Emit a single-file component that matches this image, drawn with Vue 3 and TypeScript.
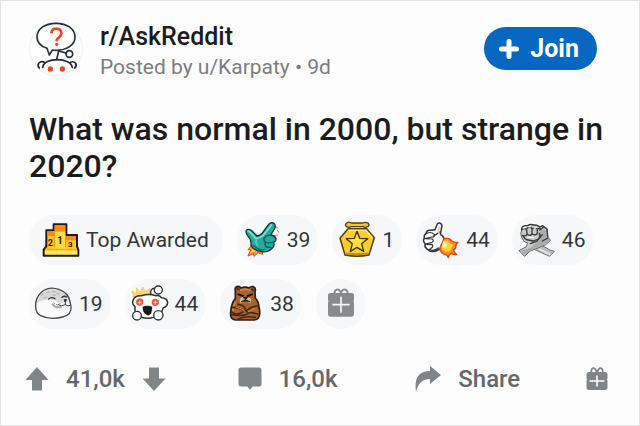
<script setup lang="ts">
import { ref } from 'vue'

interface Award {
  id: string
  label: string
  count: number
  box: string
}

const awards: Award[] = [
  { id: 'rocket-hand', label: 'Rocket hand', count: 39, box: '45 49 108 108' },
  { id: 'star', label: 'Star medal', count: 1, box: '327 49 108 108' },
  { id: 'like', label: 'Rocket like', count: 44, box: '54 49 108 108' },
  { id: 'clasp', label: 'Clasped hands', count: 46, box: '336 49 108 108' },
  { id: 'seal', label: 'Wholesome seal', count: 19, box: '48 48 108 108' },
  { id: 'snoo', label: 'Starry snoo', count: 44, box: '330 48 108 108' },
  { id: 'bear', label: 'Bear hug', count: 38, box: '45 48 108 108' },
]

const joined = ref<boolean>(false)
</script>

<template>
  <article class="post">
    <header class="head">
      <svg class="avatar" viewBox="0 0 162 162" aria-hidden="true">
        <circle cx="81" cy="81" r="79" fill="#fff" stroke="#eeeff0" stroke-width="3" />
        <g fill="none" stroke="#26292d" stroke-width="5" stroke-linecap="round" stroke-linejoin="round">
          <path d="M54 79C36 73 24 60 24 45C24 21 48 4 81 4s57 17 57 41s-25 40-57 40q-6 0-11-1L61 99Z" stroke="#213244" />
          <path d="M83 113l6-26l22 6" />
          <circle cx="121" cy="96" r="10" />
          <path d="M41 136C45 106 124 104 130 136" />
          <path d="M31 138q-7-8-1-15q8-8 18-1M123 122q9-6 16 1q6 8-2 15" />
        </g>
        <path d="M67 34q1-14 15-14q15 0 15 14q0 8-8 13q-6 4-6 11" fill="none" stroke="#f4441f" stroke-width="8" />
        <circle cx="83" cy="67" r="5" fill="#f4441f" />
        <circle cx="64" cy="141" r="8" fill="#f4441f" />
        <circle cx="100" cy="141" r="8" fill="#f4441f" />
      </svg>
      <div class="who">
        <a class="sub" href="#">r/AskReddit</a>
        <p class="by">Posted by u/Karpaty • 9d</p>
      </div>
      <button class="join" type="button" :aria-pressed="joined" @click="joined = !joined">
        <svg class="plus" viewBox="0 0 20 20" aria-hidden="true">
          <path d="M10 2.500v15M2.500 10h15" fill="none" stroke="#fff" stroke-width="5" stroke-linecap="round" />
        </svg>
        Join
      </button>
    </header>

    <h1 class="title">What was normal in 2000, but strange in 2020?</h1>

    <ul class="awards">
      <li class="pill top">
        <svg class="icon" viewBox="69 49 108 108" aria-hidden="true">
          <path d="M71 150V132L79 122V74h22V56h38v32h32v34l4 10v18Z" fill="#ffc52b" stroke="#211a18" stroke-width="6" stroke-linejoin="round" />
          <path d="M82 77h21v14H82ZM104 59h32v20h-32ZM138 91h30v13h-30Z" fill="#f68b1e" />
          <path d="M104 78h32v52h-32Z" fill="#ffdb3c" />
          <path d="M103 77v48M137 90v35" stroke="#e5941e" stroke-width="3" />
          <path d="M75 135h97v11H75Z" fill="#ffe777" />
          <path d="M76 131h95" stroke="#eda421" stroke-width="3" />
          <g class="rank" fill="#2a2119" text-anchor="middle">
            <text x="91" y="121" font-size="27">2</text>
            <text x="120" y="116" font-size="31">1</text>
            <text x="151" y="125" font-size="24">3</text>
          </g>
        </svg>
        <span>Top Awarded</span>
      </li>

      <li v-for="award in awards" :key="award.id" class="pill">
        <svg class="icon" :viewBox="award.box" role="img" :aria-label="award.label">
          <g v-if="award.id === 'rocket-hand'" stroke-linejoin="round" stroke-linecap="round">
            <path d="M68 119l-11 13l8 0l-8 19l17-7l1 8l12-11l14 5l-4-18Z" fill="#ff9b2c" stroke="#dc4a20" stroke-width="3" />
            <path d="M72 127l-5 13l11-4l10 0Z" fill="#ffe25c" />
            <path d="M139 62l8 5M145 73l4 7M137 91l8-3" stroke="#ef6659" stroke-width="3" fill="none" />
            <path d="M53 73q8-5 17 4l14 14q9-1 16-9l19-26q8-8 17-2q5 6 1 15l-12 19q12 1 16 10q1 8-7 13q4 9-4 16q-12 14-31 11Q75 136 66 119Q68 103 56 90Q48 79 53 73Z" fill="#26aaa0" stroke="#17363b" stroke-width="4" />
            <path d="M57 77q5-1 10 6l13 15q11 1 23-9l24-31" fill="none" stroke="#7de2cf" stroke-width="5" />
            <path d="M123 89q-11-2-18 9q-2 10 8 13q10 2 20-2M108 112q-1 10 8 13l10 0M74 119q12 15 31 13" fill="none" stroke="#145e60" stroke-width="4" />
            <path d="M82 103q-4 9 4 16" fill="none" stroke="#63d4c3" stroke-width="4" />
          </g>

          <g v-else-if="award.id === 'star'" stroke-linejoin="round">
            <path d="M350 52q7-5 14 0h34q8-4 16 0q6 7-1 11q-8 4-14 0h-35q-8 4-15 0q-5-6 1-11Z" fill="#eec931" stroke="#51400f" stroke-width="4" />
            <path d="M357 66l-2 7M407 66l2 7" stroke="#5b4711" stroke-width="4" />
            <path d="M354 69h56l23 27l-16 52q-36 7-72 0l-15-50Z" fill="#f4ce30" stroke="#51400f" stroke-width="4.500" />
            <path d="M356 74h52l20 23" fill="none" stroke="#fff082" stroke-width="4" />
            <path d="M348 143q34 5 66 0" fill="none" stroke="#c68a16" stroke-width="5" />
            <path d="M381 77l8 21l24 1l-18 15l6 23l-20-12l-20 12l6-23l-18-15l24-1Z" fill="#ffdf39" stroke="#42320d" stroke-width="4" />
          </g>

          <g v-else-if="award.id === 'like'" stroke-linejoin="round" stroke-linecap="round">
            <path d="M90 72l6-15q2-6 8-5q8 2 6 13l-4 21q16 9 10 25q-3 14-17 22Q79 144 65 129q-8-6-4-14q-9-9-3-18q-2-9 5-13q1-12 15-10Z" fill="#fff" stroke="#303235" stroke-width="4.500" />
            <path d="M64 84q13-8 24 2q3 8-7 8l-20 5M60 99l22 1q7 7-3 11l-17 4M64 116l18 1q4 8-5 11M85 91q10-4 18-12M72 130q14 9 28-3" fill="none" stroke="#303235" stroke-width="3.500" />
            <path d="M103 64l-3 16" fill="none" stroke="#d5d7d8" stroke-width="5" />
            <path d="M117 99Q131 94 141 106Q150 112 159 110Q150 118 153 124Q152 131 145 133Q149 143 155 147Q144 146 138 143Q132 147 130 156Q126 147 121 147Q111 145 106 136Q103 127 109 117Z" fill="#ff8b20" stroke="#df451b" stroke-width="4" />
            <path d="M115 105Q127 102 132 109Q136 116 146 117Q138 123 141 129Q134 131 133 138Q127 134 122 141Q121 134 111 133Q106 125 112 117Z" fill="#ffd734" />
            <path d="M114 108q9 0 12 9q-2 9-12 10q-4-9 0-19Z" fill="#fff7ad" />
          </g>

          <g v-else-if="award.id === 'clasp'" stroke-linejoin="round" stroke-linecap="round">
            <path d="M377 104l52 29l13 4l-14 15l-43-19l-18-14Z" fill="#bcbdbd" stroke="#777" stroke-width="3" />
            <path d="M344 71q0-10 11-11l8-1l8-3l9 2l10 1l9 5l8-4l13 10l2 23l9 11l-15 13l-48 20l-15 15l-17-17l22-12l4-11q-14-2-17-15q-7-12-1-26Z" fill="#c9caca" stroke="#666" stroke-width="3" />
            <path d="M394 84q12-16 21-12l7 18l8 14l-20 13l-44 20l-12 12l-12-14l29-9l25-22Z" fill="#a9aaaa" />
            <path d="M344 73q9-9 15 0l1 14q-6 6-14 2M360 69q8-11 15-1v17q-6 8-14 1M376 70q8-10 15 0v14q-7 7-15 1M391 70q8-5 11 2M349 91q5 12 15 12l15 3l15-6q8-10 3-17M370 114l19-7l17-20M398 73l13-9M406 106l17-9M344 71q0-10 11-11l8-1l8-3l9 2l10 1l9 5l8-4l13 10l2 23" fill="none" stroke="#383838" stroke-width="4" />
            <path d="M349 67l7-2M364 63l7-1M380 64l8 1M362 94l18 2" fill="none" stroke="#f6f6f6" stroke-width="4" />
            <path d="M399 131l29 15" fill="none" stroke="#e1e2e2" stroke-width="6" />
          </g>

          <g v-else-if="award.id === 'seal'" stroke-linejoin="round" stroke-linecap="round">
            <path d="M47 112Q45 84 65 66Q89 47 118 59Q144 69 149 91L153 109Q156 134 128 141Q91 151 62 137Q48 131 47 112Z" fill="#fafafa" />
            <path d="M50 100Q55 75 75 63Q99 51 122 64Q142 74 145 93Q124 104 103 91Q76 84 50 100Z" fill="#d8d8d8" />
            <path d="M65 76l5-4M80 68l6-2M97 64l8 1M111 70l7 2M72 84l8-3M99 75l8 1" stroke="#b6b6b6" stroke-width="4" />
            <path d="M47 112Q45 84 65 66Q89 47 118 59Q144 69 149 91L153 109Q156 134 128 141Q91 151 62 137Q48 131 47 112Z" fill="none" stroke="#454545" stroke-width="4" />
            <path d="M86 87q9-8 19-1M126 82q7-6 14-1" fill="none" stroke="#363636" stroke-width="4" />
            <path d="M131 88l10 0l-3 7l-5 0Z" fill="#242424" />
            <path d="M136 94v10q-11 7-22 0M136 104q8 7 16 2" fill="none" stroke="#3c3c3c" stroke-width="3" />
            <path d="M98 103q8 12 25 8" fill="none" stroke="#aaa" stroke-width="6" />
            <path d="M102 99l1 1M110 104l1 1M118 99l1 1" stroke="#555" stroke-width="3" />
          </g>

          <g v-else-if="award.id === 'snoo'" stroke-linejoin="round" stroke-linecap="round">
            <path d="M335 82l-5-19l13 8l0-17l13 12l6-15l9 14l13-10l-1 21Z" fill="#ffd971" stroke="#f3b855" stroke-width="2" />
            <path d="M387 76q-5-21 12-22" fill="none" stroke="#313131" stroke-width="4" />
            <circle cx="409" cy="60" r="12" fill="#fff" stroke="#303030" stroke-width="4" />
            <path d="M333 91Q338 76 358 77q22-7 44 0q12-3 16 6q17 1 19 14q-1 13-14 17q-4 26-36 30q-30 4-45-15q-5-9-3-19q-10-8-6-19Z" fill="#fff" stroke="#303030" stroke-width="4.500" />
            <circle cx="353" cy="96" r="11" fill="#ef5940" />
            <circle cx="400" cy="97" r="11" fill="#ef5940" />
            <path d="M353 90l2 5l5 1l-5 3l-2 5l-2-5l-5-2l5-2ZM400 91l2 4l5 1l-5 3l-2 5l-2-5l-5-2l5-2Z" fill="#ffd1a1" />
            <path d="M362 110q14-6 29 0l-3 20q-8 11-17 3q-10-8-9-23Z" fill="#191919" />
            <circle cx="345" cy="137" r="13" fill="#fff" stroke="#303030" stroke-width="4" />
            <circle cx="409" cy="136" r="14" fill="#fff" stroke="#303030" stroke-width="4" />
          </g>

          <g v-else stroke-linejoin="round" stroke-linecap="round">
            <path d="M70 63q-3-13 8-14q6 0 9 5q12-5 24 0q5-6 13-4q9 4 5 15l1 19q10 10 11 28q4 15 1 25q-3 13-17 13H71q-13-2-15-14q-1-15 3-29q2-12 11-22Z" fill="#a8622b" stroke="#2b1d19" stroke-width="5" />
            <path d="M76 56l6 3M120 57l3 4" stroke="#4a2a1b" stroke-width="6" />
            <path d="M85 61q14-6 28 0M69 99q-7 13-6 25" fill="none" stroke="#c98a4b" stroke-width="5" />
            <path d="M79 73l14 5M120 73l-13 5" stroke="#23130e" stroke-width="6" />
            <path d="M83 89q5-10 16-9q13-1 19 8l-3 12q-15-8-30 0Z" fill="#d6ba91" />
            <path d="M95 82h12l-6 7ZM88 95q12-9 25 0" fill="#221a1a" stroke="#221a1a" stroke-width="3" />
            <path d="M62 112q21 0 38 12l37 8M136 108q-17 1-32 13l-20 9q-17 6-24-5M78 103q18 2 22 14M60 134q34 6 50-4M79 147q20-10 51-5" fill="none" stroke="#44281c" stroke-width="5" />
            <path d="M74 113q19 3 25 13M128 116l-19 9" fill="none" stroke="#cb7d3b" stroke-width="4" />
          </g>
        </svg>
        <span>{{ award.count }}</span>
      </li>

      <li>
        <button class="pill give" type="button" aria-label="Give award">
          <svg class="icon" viewBox="330 48 108 108" aria-hidden="true">
            <path d="M384 70q-4-14-13-11q-9 4-5 13M384 70q4-14 13-11q9 4 5 13" fill="none" stroke="#878b8e" stroke-width="6" />
            <path d="M352 69h64q7 0 7 7v15l-2 3l2 3v36q0 7-7 7h-64q-7 0-7-7V97l2-3l-2-3V76q0-7 7-7Z" fill="#878b8e" />
            <path d="M384 80v48M358 104h52" stroke="#f6f7f9" stroke-width="5" />
          </svg>
        </button>
      </li>
    </ul>

    <footer class="actions">
      <div class="votes">
        <button class="action" type="button" aria-label="Upvote">
          <svg class="glyph" viewBox="0 0 24 24" aria-hidden="true">
            <path d="M12 0L23.500 13H17v10.500H7V13H.5Z" />
          </svg>
        </button>
        <span class="score">41,0k</span>
        <button class="action" type="button" aria-label="Downvote">
          <svg class="glyph" viewBox="0 0 24 24" aria-hidden="true">
            <path d="M12 24L.5 11.500H7V.5h10v11h6.500Z" />
          </svg>
        </button>
      </div>
      <button class="action" type="button">
        <svg class="glyph" viewBox="0 0 24 24" aria-hidden="true">
          <path d="M3 0.500h18q2.500 0 2.500 2.500v14.500q0 2-2.500 2h-6.500L12 23l-2.500-3.500H3q-2.500 0-2.500-2V3Q.5.500 3 .5Z" />
        </svg>
        <span>16,0k</span>
      </button>
      <button class="action" type="button">
        <svg class="glyph wide" viewBox="0 0 26 26" aria-hidden="true">
          <path d="M15 0L26 9L15 18V13Q4 13 1 26Q-2 5 15 5Z" />
        </svg>
        <span>Share</span>
      </button>
      <button class="action" type="button" aria-label="Give award">
        <svg class="glyph" viewBox="0 0 24 24" aria-hidden="true">
          <path d="M12 6Q10.500 .5 8 1.200Q5.500 2.200 6.500 6M12 6Q13.500 .5 16 1.200Q18.500 2.200 17.500 6" fill="none" stroke="#808588" stroke-width="1.800" />
          <path d="M4 5h16q2.500 0 2.500 2.500v4l-.7 1l.7 1V20.500q0 2.500-2.500 2.500H4q-2.500 0-2.500-2.500V13.500l.7-1l-.7-1V7.500Q1.500 5 4 5Z" />
          <path d="M12 8.500v11M4.500 14h15" stroke="#fff" stroke-width="1.600" />
        </svg>
      </button>
    </footer>
  </article>
</template>

<style>
body {
  margin: 0;
  background: #fdfdfd;
}
</style>

<style scoped>
.post {
  box-sizing: border-box;
  min-height: 100vh;
  padding: 21px 28px 0;
  border: 1px solid #e2e3e4;
  background: #fdfdfd;
  color: #1b1c1d;
  font-family: Roboto, "Liberation Sans", sans-serif;
}

button {
  border: 0;
  padding: 0;
  background: none;
  font: inherit;
  color: inherit;
  cursor: pointer;
}

svg {
  display: block;
  flex: none;
}

.head {
  display: flex;
  align-items: flex-start;
}

.avatar {
  width: 54px;
  height: 54px;
}

.who {
  flex: 1;
  margin-left: 17px;
}

.sub {
  display: block;
  color: inherit;
  font-size: 25px;
  font-weight: 500;
  line-height: 30px;
  text-decoration: none;
}

.by {
  margin: 0;
  color: #7b7d7f;
  font-size: 21px;
  line-height: 30px;
}

.join {
  display: flex;
  align-items: center;
  gap: 11px;
  height: 43px;
  margin: 5px 14px 0 0;
  padding: 0 18px 0 15px;
  border-radius: 22px;
  background: #0868c1;
  color: #fff;
  font-size: 25px;
  font-weight: 700;
}

.plus {
  width: 20px;
  height: 20px;
}

.title {
  margin: 29px 0 0;
  font-size: 32px;
  font-weight: 500;
  line-height: 37px;
}

.awards {
  display: flex;
  flex-wrap: wrap;
  gap: 14px;
  margin: 30px 0 0;
  padding: 0;
  list-style: none;
}

.pill {
  display: flex;
  align-items: center;
  gap: 7px;
  height: 50px;
  padding: 0 8px 0 7px;
  border-radius: 25px;
  background: #f6f7f9;
  color: #333638;
  font-size: 21px;
}

.pill.top {
  padding: 0 14px;
}

.pill.give {
  padding: 0 7px;
}

.icon {
  width: 36px;
  height: 36px;
  overflow: visible;
}

.rank {
  font-weight: 700;
}

.actions {
  display: grid;
  grid-template-columns: 213fr 178fr 170fr auto;
  align-items: center;
  margin: 35px 2px 0 -4px;
  color: #65686a;
  font-size: 24px;
  font-weight: 500;
  line-height: 30px;
}

.votes,
.action {
  display: flex;
  align-items: center;
  gap: 17px;
}

.glyph {
  width: 24px;
  height: 24px;
  fill: #808588;
}

.glyph.wide {
  width: 26px;
  height: 26px;
}
</style>
